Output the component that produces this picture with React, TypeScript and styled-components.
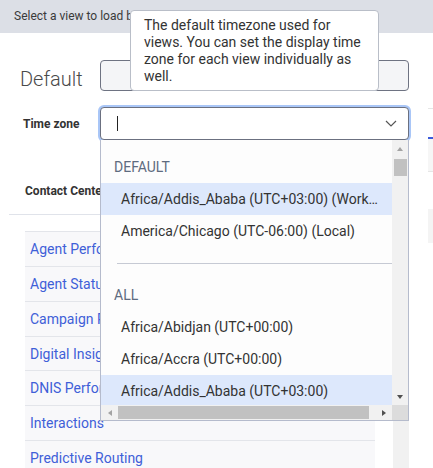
import React from "react";
import styled, { createGlobalStyle } from "styled-components";

const GlobalStyle = createGlobalStyle`
  html, body { margin: 0; padding: 0; background: #fff; }
  body { font-family: Roboto, "Noto Sans", "Liberation Sans", sans-serif; color: #333; }
  * { box-sizing: border-box; }
`;

const Page = styled.div`
  width: 433px;
  height: 468px;
  overflow: hidden;
  background: #fff;
`;

const TopBar = styled.div`
  height: 33px;
  background: #dcdfe6;
  padding-left: 14px;
  font-size: 12px;
  line-height: 33px;
  color: #3a3a3a;
  white-space: nowrap;
  overflow: hidden;
`;

const Main = styled.div`
  display: flex;
  align-items: flex-start;
`;

const LeftPanel = styled.div`
  margin-left: 9px;
  width: 400px;
  flex-shrink: 0;
  display: flex;
  flex-direction: column;
`;

const DefaultRow = styled.div`
  display: flex;
  align-items: flex-start;
  margin-top: 27px;
  height: 31px;
  padding-left: 11px;
`;

const Heading = styled.h2`
  margin: 7px 0 0;
  width: 80px;
  font-family: "Roboto Light", Roboto, "Noto Sans", sans-serif;
  font-size: 20px;
  font-weight: 300;
  line-height: 24px;
  color: #4a4a4a;
`;

const NameBox = styled.div`
  flex: 1;
  height: 31px;
  border: 1px solid #6e7382;
  border-radius: 4px;
  background: #f4f5f7;
`;

const TimeZoneRow = styled.div`
  display: flex;
  align-items: center;
  margin-top: 16px;
  padding-left: 14px;
`;

const Label = styled.label`
  width: 77px;
  font-size: 12px;
  font-weight: 700;
  line-height: 14px;
  color: #333;
`;

const SelectWrap = styled.div`
  position: relative;
  flex: 1;
`;

const Select = styled.div`
  height: 33px;
  border: 1px solid #6b7080;
  border-radius: 4px;
  box-shadow: 0 0 0 2px #a9c6f7;
  background: #fff;
  display: flex;
  align-items: center;
  justify-content: space-between;
  padding: 0 11px 0 16px;
`;

const Caret = styled.span`
  width: 1px;
  height: 15px;
  background: #222;
`;

const Tooltip = styled.div`
  position: absolute;
  left: 30px;
  bottom: calc(100% + 16px);
  width: 249px;
  padding: 6px 13px 5px;
  border: 1px solid #b9bec8;
  border-radius: 4px;
  background: #fff;
  font-size: 14px;
  line-height: 17px;
  color: #333;
  z-index: 3;
`;

const Dropdown = styled.div`
  position: absolute;
  top: 100%;
  left: 0;
  right: 0;
  height: 281px;
  border: 1px solid #b5bbcc;
  border-top: none;
  background: #fdfdfd;
  display: grid;
  grid-template-columns: 1fr 16px;
  grid-template-rows: 1fr 15px;
  z-index: 2;
`;

const List = styled.div`
  overflow: hidden;
  padding-top: 11px;
`;

const GroupHeader = styled.div`
  height: 32px;
  line-height: 32px;
  padding-left: 13px;
  font-size: 14px;
  color: #5e6b80;
  text-transform: uppercase;
`;

const Option = styled.div<{ $active?: boolean }>`
  height: 32px;
  line-height: 32px;
  padding: 0 12px 0 20px;
  font-size: 14px;
  color: #333;
  white-space: nowrap;
  overflow: hidden;
  text-overflow: ellipsis;
  background: ${(p) => (p.$active ? "#dde8fc" : "transparent")};
`;

const Separator = styled.div`
  height: 1px;
  background: #c6cad4;
  margin: 16px 0 15px 16px;
`;

const VScroll = styled.div`
  background: #f1f1f1;
  display: flex;
  flex-direction: column;
  align-items: center;
`;

const HScroll = styled.div`
  background: #f1f1f1;
  display: flex;
  align-items: center;
`;

const Corner = styled.div`
  background: #dcdcdc;
`;

const ArrowButton = styled.div<{ $w: number; $h: number }>`
  width: ${(p) => p.$w}px;
  height: ${(p) => p.$h}px;
  flex-shrink: 0;
  display: flex;
  align-items: center;
  justify-content: center;
`;

const Triangle = styled.span<{ $dir: "up" | "down" | "left" | "right"; $dark?: boolean }>`
  width: 0;
  height: 0;
  ${(p) => {
    const c = p.$dark ? "#505050" : "#a3a3a3";
    switch (p.$dir) {
      case "up":
        return `border-left: 3.5px solid transparent; border-right: 3.5px solid transparent; border-bottom: 4px solid ${c};`;
      case "down":
        return `border-left: 3.5px solid transparent; border-right: 3.5px solid transparent; border-top: 4px solid ${c};`;
      case "left":
        return `border-top: 3.5px solid transparent; border-bottom: 3.5px solid transparent; border-right: 4px solid ${c};`;
      default:
        return `border-top: 3.5px solid transparent; border-bottom: 3.5px solid transparent; border-left: 4px solid ${c};`;
    }
  }}
`;

const VThumb = styled.div`
  width: 13px;
  height: 17px;
  margin-top: 2px;
  background: #c1c1c1;
`;

const HThumb = styled.div`
  width: 251px;
  height: 13px;
  background: #c1c1c1;
`;

const Spacer = styled.div`
  flex: 1;
`;

const SectionHeader = styled.div`
  margin-top: 44px;
  padding: 0 0 16px 16px;
  font-size: 12px;
  font-weight: 700;
  line-height: 14px;
  color: #333;
  border-bottom: 1px solid #e0e3ea;
`;

const ListArea = styled.div`
  display: flex;
  height: 260px;
`;

const Rows = styled.div`
  margin: 16px 0 0 16px;
  width: 350px;
  display: flex;
  flex-direction: column;
`;

const Row = styled.div`
  height: 35px;
  border-top: 1px solid #e3e5ea;
  background: #f8f8fa;
  padding-left: 5px;
  line-height: 34px;
  font-size: 14px;
  color: #3f5fd8;
  white-space: nowrap;
  overflow: hidden;
`;

const PageScrollTrack = styled.div`
  margin-left: auto;
  width: 16px;
  background: #f1f1f1;
`;

const RightPanel = styled.div`
  margin-left: 19px;
  width: 40px;
  flex-shrink: 0;
  display: flex;
  flex-direction: column;
`;

const Tabs = styled.div`
  margin-top: 75px;
  height: 31px;
  border-top: 1px solid #e6e6e6;
  border-bottom: 2px solid #3b5bdb;
`;

const TabBody = styled.div`
  height: 33px;
  background: #f6f6f6;
  border-bottom: 1px solid #e6e6e6;
`;

const Card = styled.div`
  margin-top: 37px;
  height: 34px;
  background: #f4f4f4;
`;

const Chevron = () => (
  <svg width="12" height="7" viewBox="0 0 12 7" fill="none">
    <path d="M1 1 L6 6 L11 1" stroke="#555" strokeWidth="1.2" />
  </svg>
);

const views = [
  "Agent Performance",
  "Agent Status",
  "Campaign Performance",
  "Digital Insights",
  "DNIS Performance",
  "Interactions",
  "Predictive Routing",
];

export default function App() {
  return (
    <>
      <GlobalStyle />
      <Page>
        <TopBar>Select a view to load by clicking on its name.</TopBar>
        <Main>
          <LeftPanel>
            <DefaultRow>
              <Heading>Default</Heading>
              <NameBox />
            </DefaultRow>
            <TimeZoneRow>
              <Label>Time zone</Label>
              <SelectWrap>
                <Select>
                  <Caret />
                  <Chevron />
                </Select>
                <Tooltip>
                  The default timezone used for views. You can set the display time zone for each view individually as well.
                </Tooltip>
                <Dropdown>
                  <List>
                    <GroupHeader>Default</GroupHeader>
                    <Option $active>Africa/Addis_Ababa (UTC+03:00) (Workspace)</Option>
                    <Option>America/Chicago (UTC-06:00) (Local)</Option>
                    <Separator />
                    <GroupHeader>All</GroupHeader>
                    <Option>Africa/Abidjan (UTC+00:00)</Option>
                    <Option>Africa/Accra (UTC+00:00)</Option>
                    <Option $active>Africa/Addis_Ababa (UTC+03:00)</Option>
                    <Option>Africa/Algiers (UTC+01:00)</Option>
                  </List>
                  <VScroll>
                    <ArrowButton $w={16} $h={17}>
                      <Triangle $dir="up" />
                    </ArrowButton>
                    <VThumb />
                    <Spacer />
                    <ArrowButton $w={16} $h={17}>
                      <Triangle $dir="down" $dark />
                    </ArrowButton>
                  </VScroll>
                  <HScroll>
                    <ArrowButton $w={17} $h={15}>
                      <Triangle $dir="left" />
                    </ArrowButton>
                    <HThumb />
                    <Spacer />
                    <ArrowButton $w={17} $h={15}>
                      <Triangle $dir="right" $dark />
                    </ArrowButton>
                  </HScroll>
                  <Corner />
                </Dropdown>
              </SelectWrap>
            </TimeZoneRow>
            <SectionHeader>Contact Center</SectionHeader>
            <ListArea>
              <Rows>
                {views.map((v) => (
                  <Row key={v}>{v}</Row>
                ))}
              </Rows>
              <PageScrollTrack />
            </ListArea>
          </LeftPanel>
          <RightPanel>
            <Tabs />
            <TabBody />
            <Card />
          </RightPanel>
        </Main>
      </Page>
    </>
  );
}
